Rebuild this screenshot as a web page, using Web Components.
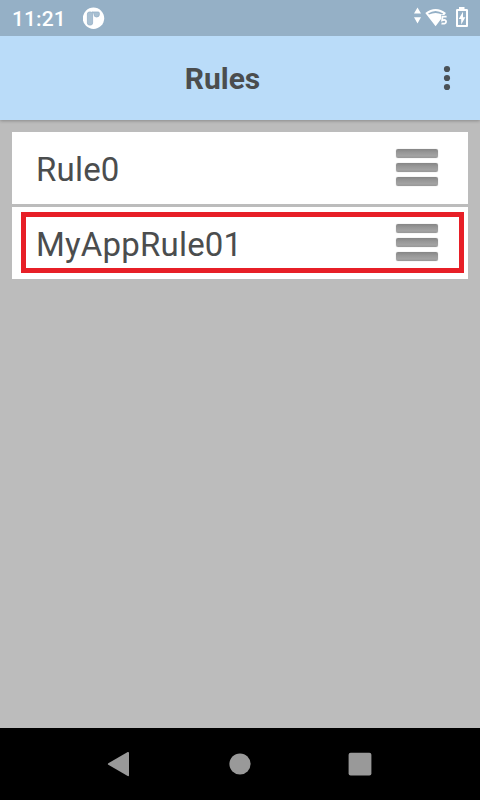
<!DOCTYPE html>
<html lang="en"><head><meta charset="utf-8"><title>Rules</title>
<style>html,body{margin:0;height:100%;overflow:hidden}body{font-family:Roboto,sans-serif;color:#4b4d4e}</style></head>
<body><rules-screen></rules-screen>
<script>
const define=(name,html)=>customElements.define(name,class extends HTMLElement{
  constructor(){super();this.attachShadow({mode:'open'}).innerHTML=html;}
});
define('status-bar',`<style>
:host{display:flex;height:36px;box-sizing:border-box;background:#95b0c6;color:#fff;align-items:center;padding:1px 0 0 12px}
.time{font-size:21px;font-weight:500;line-height:34px;letter-spacing:.1px;width:71px}
svg{display:block}.right{margin-left:auto}
</style><span class="time">11:21</span>
<svg width="22" height="35" viewBox="83 1 22 35"><circle cx="93.5" cy="18.3" r="10.7" fill="#fff"/><g fill="#a9c0d2" stroke="#95b0c6" stroke-width=".8"><rect x="87.4" y="12" width="5.2" height="13" rx="2"/><path d="M92 12H98.2Q99.4 12 99.4 13.4V14.2Q99.4 17 96.7 17Q94 17 94 14.5V13.5Z"/></g></svg>
<svg class="right" width="70" height="35" viewBox="410 1 70 35" fill="#fff"><path d="M417.5 7.5 421 13.6H414ZM417.5 23.5 421 17.2H414Z"/><path d="M425.3 13Q435.5 4.8 446 13L444.3 15.1H441.2V18.8L435.6 26.3Z"/><path d="M428.1 13.4Q435.5 8.4 443.2 13.4L442.2 14.5Q435.5 11.5 429 14.5Z" fill="#95b0c6"/><path d="M446.6 16.7H442.5L442.1 20.4Q446.1 19 446.1 21.8Q446 24.3 441.5 23.5" fill="none" stroke="#fff" stroke-width="1.8"/><path fill-rule="evenodd" d="M459 7H464.5V9H466.7Q468 9 468 10.3V26Q468 27 467 27H457Q456 27 456 26V10.3Q456 9 457.3 9H459ZM458 11V25H466V11Z"/><path d="M463 11.8 458.7 19H461.2V24.5L465.4 17.2H463Z"/></svg>`);
define('app-bar',`<style>
:host{display:grid;grid-template-columns:35px 1fr 40px;height:84px;background:#badcf9;align-items:center;box-shadow:0 1px 3px #0004;position:relative}
.title{grid-column:2;text-align:center;font-size:30px;font-weight:700;line-height:36px;padding:1px 30px 0 0}
svg{display:block}
</style><span class="title"><slot></slot></span><svg width="12" height="84" viewBox="0 0 12 84" fill="#4a5157"><circle cx="7" cy="33" r="3.1"/><circle cx="7" cy="42" r="3.1"/><circle cx="7" cy="51" r="3.1"/></svg>`);
define('drag-handle',`<style>
:host{display:grid;gap:5px;width:42px;margin-bottom:1px;filter:blur(.55px)}
i{display:block;height:9px;border-radius:2px;background:linear-gradient(#858585,#969696 35%,#a3a3a3 75%,#979797);box-shadow:0 0 1px #aaa}
</style><i></i><i></i><i></i>`);
define('rule-row',`<style>
:host{display:flex;position:relative;height:72px;box-sizing:border-box;background:#fff;align-items:center;justify-content:space-between;padding:0 30px 0 24px}
.name{font-size:33px;line-height:40px;padding-top:4px;letter-spacing:.2px}
.mark{display:none;position:absolute;left:9px;right:4px;top:5px;height:61px;box-sizing:border-box;border:5px solid #e71f27}
:host([marked]) .mark{display:block}
</style><span class="name"><slot></slot></span><drag-handle></drag-handle><div class="mark"></div>`);
define('navigation-bar',`<style>
:host{display:grid;grid-template-columns:repeat(3,120px);justify-content:center;height:72px;background:#000}
svg{display:block;fill:#999}
</style><svg viewBox="0 0 120 72"><path d="M48.3 35.2 67.7 24Q69 23.7 69 25V47.2Q69 48.5 67.7 48L48.3 36.8Q47.3 36 48.3 35.2Z"/></svg><svg viewBox="0 0 120 72"><circle cx="60" cy="36" r="10.6"/></svg><svg viewBox="0 0 120 72"><rect x="48.6" y="24.7" width="22.8" height="22.8" rx="2"/></svg>`);
define('rules-screen',`<style>
:host{display:flex;flex-direction:column;width:480px;height:800px;background:#bcbcbc}
status-bar{position:relative;z-index:1}
main{flex:1;display:flex;flex-direction:column;gap:3px;padding:12px}
</style><status-bar></status-bar><app-bar>Rules</app-bar><main><rule-row>Rule0</rule-row><rule-row marked>MyAppRule01</rule-row></main><navigation-bar></navigation-bar>`);
</script></body></html>
